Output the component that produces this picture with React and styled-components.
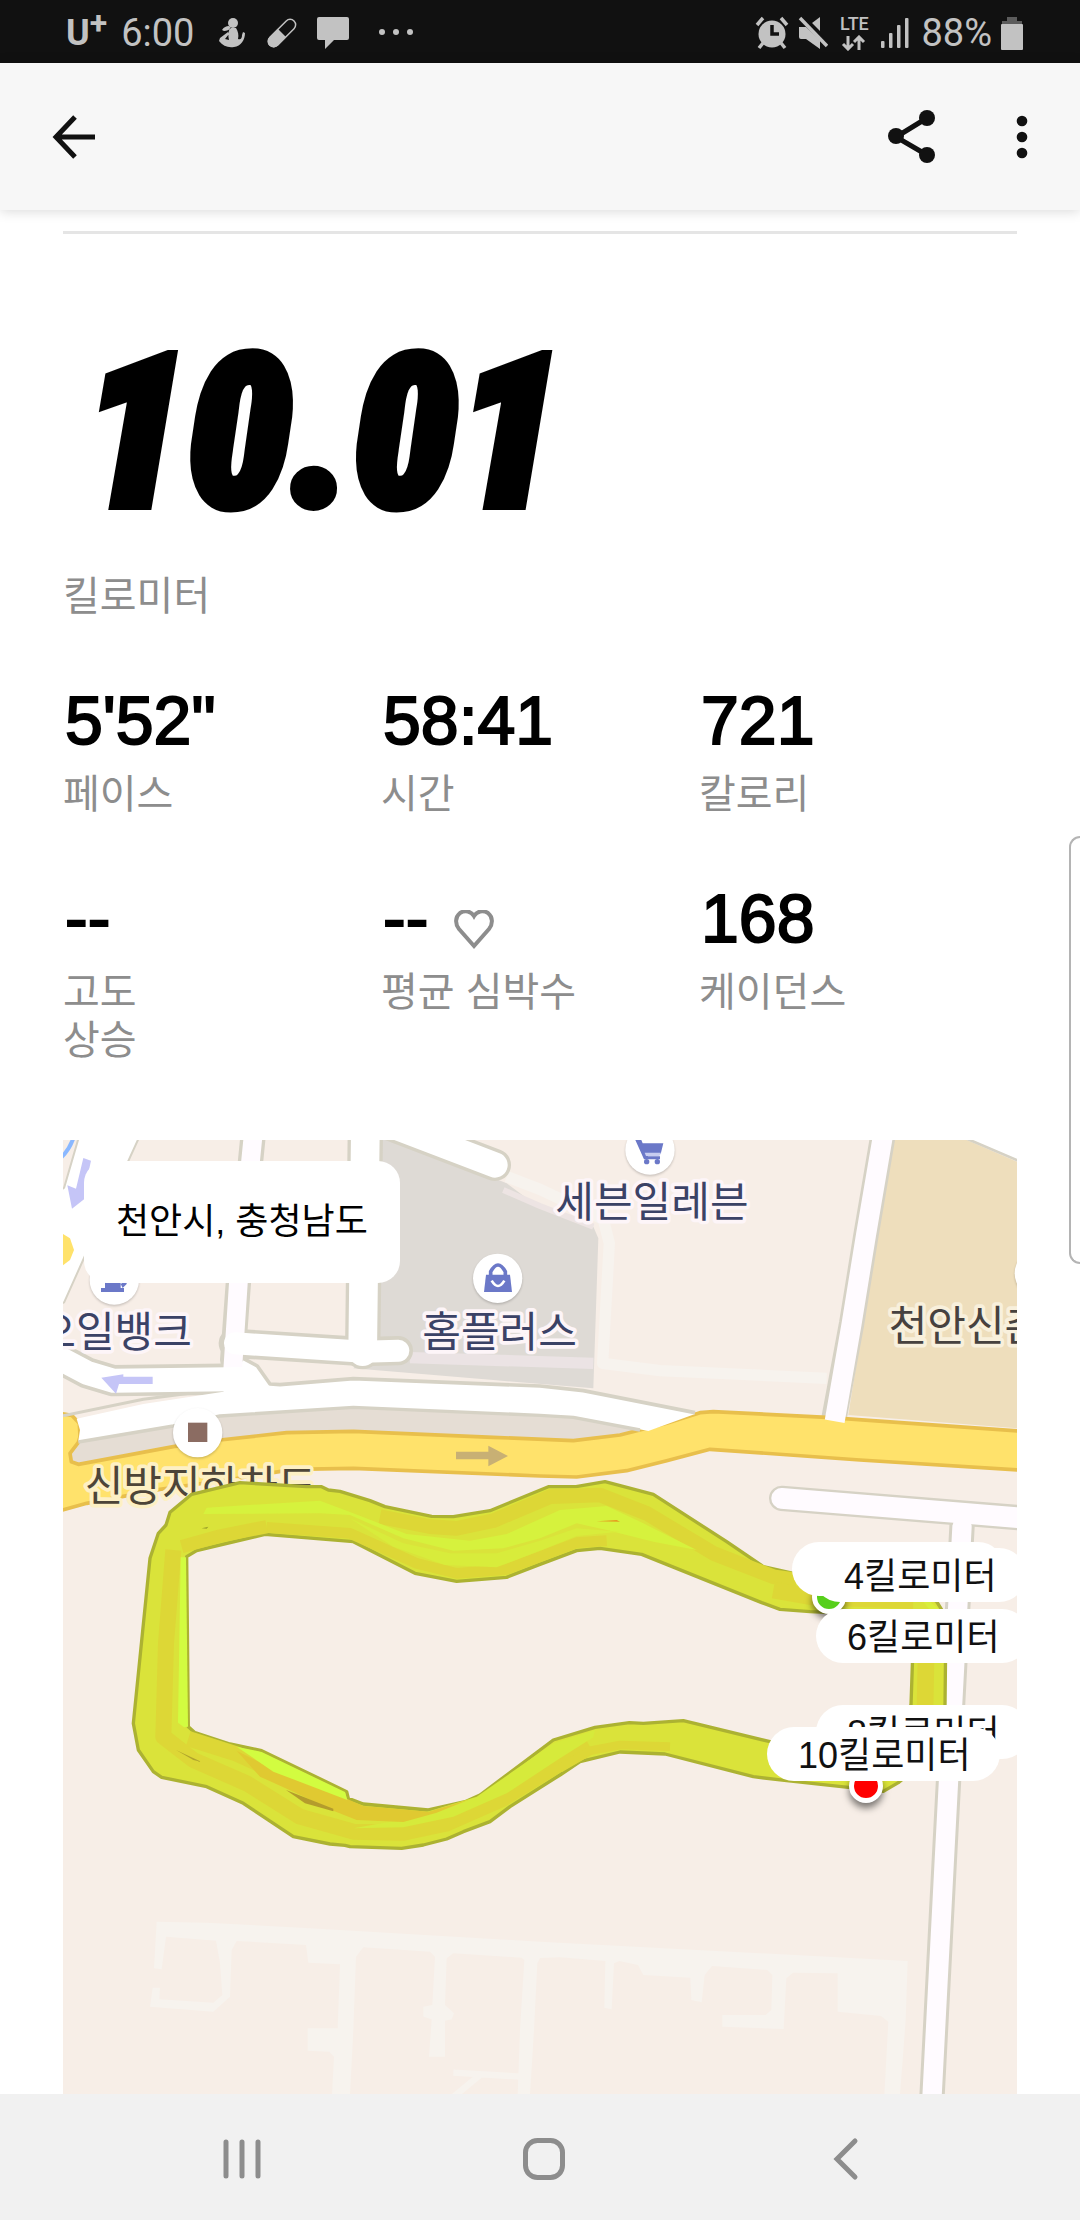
import styled, { createGlobalStyle } from 'styled-components'

const MAP_SIZE = 954

const stats = [
  { value: '5\'52"', label: '페이스' },
  { value: '58:41', label: '시간' },
  { value: '721', label: '칼로리' },
  { value: '--', label: '고도 상승', narrow: true },
  { value: '--', label: '평균 심박수', heart: true },
  { value: '168', label: '케이던스' },
]

const splits = [
  { label: '2킬로미터', x: 729, y: 402 },
  { label: '4킬로미터', x: 750, y: 408 },
  { label: '6킬로미터', x: 753, y: 469 },
  { label: '8킬로미터', x: 753, y: 565 },
  { label: '10킬로미터', x: 704, y: 587 },
]

const points = [
  { name: '출발', color: '#57cf1b', x: 766, y: 457 },
  { name: '도착', color: '#ff0000', x: 803, y: 646 },
]

const place = ({ x, y }) => ({
  left: `${(x / MAP_SIZE) * 100}%`,
  top: `${(y / MAP_SIZE) * 100}%`,
})

function StatusBar() {
  return (
    <Status>
      <StatusGroup>
        <Carrier>
          U<sup>+</sup>
        </Carrier>
        <StatusText>6:00</StatusText>
      </StatusGroup>
      <Notices>
        <svg width="30" height="34" viewBox="0 0 30 34">
          <circle cx="16" cy="7" r="5" />
          <path d="M12 10c-3 0-5 1-7 4l2 1c3 0 5-1 7-3zM13 12h6c2 3 3 7 2 11 3 1 4-1 4-4l1-3 2 1c0 7-4 13-11 14-6 1-11-1-15-6l1-3 8-6 1 2-4 5 4 1c-1-4-1-8 1-12z" />
        </svg>
        <svg width="30" height="34" viewBox="0 0 30 34">
          <g transform="rotate(45 15 17)">
            <rect x="9.500" y="0" width="11" height="34" rx="5.500" fill="none" stroke="#c2c2c2" strokeWidth="1.500" />
            <path d="M9 17h12v12a6 6 0 0 1-12 0z" />
          </g>
        </svg>
        <svg width="32" height="34" viewBox="0 0 32 34">
          <path d="M2 1h28a2 2 0 0 1 2 2v19a2 2 0 0 1-2 2H17l-9 9v-9H2a2 2 0 0 1-2-2V3a2 2 0 0 1 2-2z" />
        </svg>
        <svg width="54" height="34" viewBox="0 0 54 34">
          <circle cx="13" cy="16" r="3" />
          <circle cx="27" cy="16" r="3" />
          <circle cx="41" cy="16" r="3" />
        </svg>
      </Notices>
      <StatusGroup $end>
        <svg width="34" height="34" viewBox="0 0 34 34">
          <path d="M2 9l6-7M32 9l-6-7" stroke="#c2c2c2" strokeWidth="3.500" />
          <path d="M8 27l-4 5M26 27l4 5" stroke="#c2c2c2" strokeWidth="3.500" />
          <circle cx="17" cy="18" r="13.500" />
          <path d="M17 9v9h7" stroke="#111" strokeWidth="3.500" fill="none" />
        </svg>
        <svg width="30" height="34" viewBox="0 0 30 34">
          <path d="M1 11h7l14 13v9L8 23H3a2 2 0 0 1-2-2zM14 7l8-6v14z" />
          <path d="M5 0l26 28" stroke="#111" strokeWidth="3" />
          <path d="M2 2l27 28" stroke="#c2c2c2" strokeWidth="3.500" />
        </svg>
        <Network>
          LTE
          <svg width="26" height="16" viewBox="0 0 26 16">
            <path d="M7 1v13M2 9l5 5 5-5M18 15V2M13 7l5-5 5 5" fill="none" stroke="#c2c2c2" strokeWidth="3" />
          </svg>
        </Network>
        <svg width="32" height="34" viewBox="0 0 32 34">
          <rect x="1" y="25" width="3.500" height="7" rx="1" />
          <rect x="9" y="17" width="3.500" height="15" rx="1" />
          <rect x="17" y="9" width="3.500" height="23" rx="1" />
          <rect x="25" y="2" width="3.500" height="30" rx="1" />
        </svg>
        <StatusText>88%</StatusText>
        <svg width="22" height="34" viewBox="0 0 22 34">
          <path d="M6 1h10v4h5v5H1V5h5z" fill="#5c5c5c" />
          <rect x="0" y="8" width="22" height="26" rx="1" />
        </svg>
      </StatusGroup>
    </Status>
  )
}

function AppBar() {
  return (
    <Bar>
      <IconButton aria-label="뒤로">
        <svg width="48" height="60" viewBox="0 0 48 60">
          <path d="M45 30H7M25 10L6 30l19 20" fill="none" stroke="#111" strokeWidth="5" />
        </svg>
      </IconButton>
      <Actions>
        <IconButton aria-label="공유">
          <svg width="48" height="60" viewBox="0 0 48 60">
            <path d="M40 11L9 30l31 18" fill="none" stroke="#111" strokeWidth="5" />
            <circle cx="9" cy="29" r="8" fill="#111" />
            <circle cx="40" cy="11" r="8" fill="#111" />
            <circle cx="40" cy="48" r="8" fill="#111" />
          </svg>
        </IconButton>
        <IconButton aria-label="더보기">
          <svg width="48" height="60" viewBox="0 0 48 60">
            <circle cx="24" cy="14" r="5.300" fill="#111" />
            <circle cx="24" cy="30" r="5.300" fill="#111" />
            <circle cx="24" cy="46" r="5.300" fill="#111" />
          </svg>
        </IconButton>
      </Actions>
    </Bar>
  )
}

function Heart() {
  return (
    <svg width="40" height="40" viewBox="0 0 40 40">
      <path
        d="M20 36L5 19C1 14 1 7 6 3c5-3 11-2 14 3 3-5 9-6 14-3 5 4 5 11 1 16z"
        fill="none"
        stroke="#8d8d8d"
        strokeWidth="4"
      />
    </svg>
  )
}

function Roads() {
  return (
    <g fill="none" strokeLinejoin="round">
      {/* blocks */}
      <path d="M2500 30L2440 380 2365 855 2871 895V95L2720 30z" fill="#eedebc" />
      <path d="M2720 26L2875 92V20z" fill="#fff" stroke="#d6d2c5" strokeWidth="8" />
      <path d="M965 30H1010L1340 160 1440 235 1600 290 1615 325 1600 775 1300 750 880 715 955 640z" fill="#dedad5" />
      <path d="M1050 683L1600 700" stroke="#ebe3e4" strokeWidth="34" />
      <path d="M1340 140L1440 178 1630 268 1648 340 1628 700 1800 722 2300 745" stroke="#f7f3ee" strokeWidth="34" />
      <path d="M1330 180L1440 228 1600 290" stroke="#ede4e3" strokeWidth="18" />

      {/* casings of the white streets */}
      <g stroke="#d6d2c5" strokeLinecap="round">
        <path d="M60 20L15 175-20 200V520L10 515 75 370 235 20z" strokeWidth="12" />
        <path d="M900 -50L1305 105" strokeWidth="96" />
        <path d="M580 10L535 460 518 690" strokeWidth="76" />
        <path d="M916 10L908 665" strokeWidth="106" />
        <path d="M520 640L910 665 1015 662" strokeWidth="88" />
        <path d="M-20 675L80 728 160 752 550 747" strokeWidth="94" />
        <path d="M2470 10L2418 315 2375 580 2322 865" strokeWidth="76" strokeLinecap="butt" />
        <path d="M2165 1105L2900 1165" strokeWidth="76" />
        <path d="M2706 1190L2653 2190 2616 2900" strokeWidth="76" />
      </g>
      <path d="M60 20L15 175-20 200V520L10 515 75 370 235 20z" fill="#fff" />

      {/* underpass and the main road */}
      <path
        d="M30 940L340 885 480 855 880 830 1200 845 1540 862 1780 900 1540 940 1300 925 880 910 480 935 60 1005 30 990z"
        fill="#e5ddd4"
      />
      <path
        d="M-10 848L35 856 58 880 60 920 55 937 30 970 34 995 55 1003 340 950 480 930 680 908 880 904 1300 922 1540 932 1680 915 1820 880 1920 848 1960 845 2300 862 2880 903V1020L2400 990 1950 958 1820 992 1700 1022 1550 1041 1440 1038 880 1015 700 1018 500 1050 300 1078 80 1120-10 1145z"
        fill="#ffe26b"
        stroke="#e8bf4c"
        strokeWidth="11"
      />
      <path
        d="M50 866L250 822 490 785 550 690 592 712 630 762 880 746 1440 771 1570 784 1905 852 1765 903 1540 858 880 832 480 858 340 884 55 932 60 900z"
        fill="#fff"
      />
      <path d="M9 857L250 808 400 788" stroke="#d6d2c5" strokeWidth="9" />
      <path d="M550 685L592 708 630 762 660 764 880 746 1440 768 1570 782 1905 848" stroke="#d6d2c5" strokeWidth="11" />
      <path d="M55 936L340 888 480 858 880 832 1440 856 1540 862 1740 900" stroke="#d6d2c5" strokeWidth="10" />

      {/* street surfaces */}
      <g strokeLinecap="round" stroke="#fff">
        <path d="M900 -50L1305 105" strokeWidth="76" />
        <path d="M580 10L535 460 518 720" stroke="#fffbff" strokeWidth="56" />
        <path d="M916 10L908 665" strokeWidth="86" />
        <path d="M525 640L910 665 1015 662" strokeWidth="66" />
        <path d="M-20 675L80 728 160 752 560 747" strokeWidth="72" />
        <path d="M2470 10L2418 315 2375 580 2324 874" stroke="#fffbff" strokeWidth="60" strokeLinecap="butt" />
        <path d="M2165 1105L2900 1165" stroke="#fffbff" strokeWidth="62" />
        <path d="M2706 1190L2653 2190 2616 2900" stroke="#fffbff" strokeWidth="58" />
      </g>

      <path d="M-10 300L30 325 42 360 30 390-10 420z" fill="#ffe26b" />
      <path d="M0 85Q25 65 40 25" stroke="#8ab8ff" strokeWidth="12" />
      <path d="M70 84L93 92 74 180 76 205 36 236 22 166 48 176z" fill="#c5c5f7" />
      <path d="M278 740V762H177L168 791 124 743 190 733V740z" fill="#c5c5f7" />
      <path d="M1188 965H1285V947L1344 978 1285 1009V988H1188z" fill="#c8b074" />

      {/* footpaths of the estate in the south */}
      <path
        d="M290 2375L440 2378 750 2395 1440 2435 2543 2493 2537 2670 2520 2895H2473L2485 2675 2463 2658 2333 2645V2530L2199 2528 2179 2545 2171 2697 1987 2690V2655H2117L2134 2640 2137 2535 2122 2520 1956 2508 1934 2535 1925 2617 1894 2610 1891 2543 1750 2535 1734 2505 1678 2493 1662 2500 1655 2638 1633 2633 1636 2493 1500 2482 1440 2484 1432 2500 1422 2700 1410 2895H1373L1380 2700 1393 2490 1385 2483 1180 2470 1160 2485 1155 2625 1182 2650 1175 2668 1155 2672V2780H1107L1115 2668 1090 2660V2630L1117 2625 1125 2480 1110 2465 910 2452 888 2480 880 2700 870 2895H816L822 2780 808 2765 743 2762V2695H833L840 2503 745 2498 738 2445 530 2433 515 2460 510 2600 460 2645 270 2630 278 2573H300L298 2608 460 2618 487 2595 480 2500 468 2432 318 2420 305 2518 282 2515z"
        fill="#f7f3ee"
      />
      <path d="M1180 2828L1385 2840M1260 2835L1175 2905" stroke="#f7f3ee" strokeWidth="19" />
    </g>
  )
}

function Places() {
  return (
    <>
      <PoiDisc cx="1313" cy="445" r="74" />
      <PoiDisc cx="1770" cy="60" r="74" />
      <PoiDisc cx="163" cy="450" r="74" />
      <PoiDisc cx="413" cy="908" r="74" />
      <PoiDisc cx="2938" cy="430" r="74" />
      <g fill="#6b78c8">
        <path d="M1278 434H1350L1356 486H1272z" />
        <path d="M1292 440V425Q1314 385 1336 425V440" fill="none" stroke="#6b78c8" strokeWidth="11" />
        <path d="M1295 452Q1314 484 1333 452" fill="none" stroke="#fff" strokeWidth="8" />
        <path d="M1726 30H1744L1748 40H1810L1802 72H1760L1764 79H1800V88H1752z" />
        <path d="M1754 68H1804L1798 78H1758z" fill="#c8cdf0" />
        <circle cx="1760" cy="95" r="8" />
        <circle cx="1792" cy="95" r="8" />
        <path d="M135 420H182V474H192V486H123V474H135zM182 462L200 450V462L188 474z" />
      </g>
      <path d="M384 878H442V936H384z" fill="#8b6c62" />
      <PlaceName x="1486" y="262">세븐일레븐</PlaceName>
      <PlaceName x="1087" y="650">홈플러스</PlaceName>
      <PlaceName x="-68" y="650">오일뱅크</PlaceName>
      <PlaceName x="2486" y="633" $ink="#47423f" $halo="#f8f0dc">천안신촌</PlaceName>
      <PlaceName x="74" y="1112" $ink="#4d4538" $halo="#fdf0c4">신방지하차도</PlaceName>
    </>
  )
}

function Route() {
  return (
    <g fill="none" strokeLinejoin="round">
      <path
        d="M540 1058L740 1070 785 1070 805 1080 840 1084 930 1112 975 1130 1115 1159 1180 1160 1290 1142 1465 1070 1548 1070 1635 1055 1780 1093 2000 1235 2110 1310 2200 1330 2560 1360 2630 1415 2658 1460 2655 1725 2645 1850 2515 1958 2470 1984 2365 1972 2180 1952 2080 1940 1815 1872 1680 1866 1560 1895 1500 1935 1350 2030 1290 2075 1210 2105 1160 2127 1090 2145 1025 2155 870 2150 855 2146 810 2142 700 2120 550 2020 440 1970 305 1942 280 1925 235 1860 220 1780 270 1285 295 1210 318 1185 330 1147 395 1093z
           M380 1280L410 1262 615 1213 880 1235 1065 1330 1190 1354 1340 1342 1440 1303 1550 1262 1620 1255 1745 1273 2105 1418 2160 1438 2250 1445 2562 1460 2553 1725 2540 1850 2400 1900 2130 1835 1870 1772 1750 1780 1708 1778 1605 1792 1480 1830 1260 1995 1215 2015 1105 2040 910 2022 865 2005 860 1985 605 1862 510 1842 405 1808 385 1790z"
        fill="#dae33a"
        fillRule="evenodd"
        stroke="#acb232"
        strokeWidth="10"
      />
      {/* overlapping laps */}
      <g stroke="#ddd736">
        <path d="M960 1160L1110 1190 1190 1195 1300 1172 1470 1100 1620 1095 1760 1150 1960 1270 2140 1340 2210 1350" strokeWidth="44" />
        <path d="M620 1192L870 1210 1070 1300 1190 1330 1340 1318 1550 1238 1640 1232" strokeWidth="32" />
        <path d="M365 1250L480 1218 620 1190" strokeWidth="40" />
        <path d="M340 1260L318 1540 310 1820 400 1890 560 1960 720 2060 880 2105 1030 2108 1160 2080 1330 2005 1500 1900 1590 1850" strokeWidth="48" />
        <path d="M2140 1380L2250 1400 2560 1412M2600 1480L2595 1740" strokeWidth="50" />
        <path d="M385 1826L530 1872 700 1950" strokeWidth="46" />
        <path d="M1500 1915L1590 1862 1680 1845 1830 1850" strokeWidth="26" />
      </g>
      <path d="M440 1133L780 1112 880 1150 1040 1212 1230 1232 1340 1212 1500 1140 1640 1128 1750 1180 1910 1260 1780 1235 1640 1200 1550 1180 1440 1225 1330 1255 1180 1262 1030 1225 870 1155 780 1150 430 1152z" fill="#d6f23d" />
      <path d="M870 1165L1030 1240 1170 1270 1310 1270 1440 1232 1550 1195 1680 1205 1550 1218 1440 1262 1310 1312 1155 1305 1000 1250z" fill="#d8ec3b" />
      <path d="M1250 2000L1480 1840 1605 1800 1600 1822 1500 1885 1340 1990 1180 2060 1030 2092 880 2095 1020 2070z" fill="#d6ea3b" />
      <path d="M362 1282L378 1282 384 1790 372 1792 354 1778z" fill="#d2fc40" />
      <path d="M530 1862L640 1918 860 2006 910 2028 1105 2045 1230 2008 1130 2048 1030 2076 890 2070 820 2042 700 1985 600 1940z" fill="#e0c931" />
      <path d="M530 1850L605 1866 855 1986 862 2010 640 1925z" fill="#d2fc40" />
      <path d="M678 1980L820 2036V2044L735 2020z" fill="#b49c2c" />
      <path d="M348 1860L425 1896 400 1890z" fill="#b0a42d" />
      <path d="M1610 1174L1670 1170 1680 1175z" fill="#e59a1f" />
      <path d="M425 1195L445 1190 440 1196z" fill="#9ca02a" />
      <path d="M2590 1415L2610 1415 2640 1440H2610z" fill="#d8ee3c" />
    </g>
  )
}

function RunMap() {
  return (
    <MapBox aria-label="달리기 경로">
      <svg viewBox="9 30 2862 2862">
        <Roads />
        <Places />
        <Route />
      </svg>
      <Location>천안시, 충청남도</Location>
      {points.map((point) => (
        <Point key={point.name} title={point.name} $color={point.color} style={place(point)} />
      ))}
      {splits.map((split) => (
        <Split key={split.label} style={place(split)}>
          {split.label}
        </Split>
      ))}
    </MapBox>
  )
}

function NavBar() {
  return (
    <Nav>
      <IconButton aria-label="최근 앱">
        <svg width="48" height="48" viewBox="0 0 48 48">
          <path d="M8 7v34M24 7v34M40 7v34" stroke="#8d8d8d" strokeWidth="5" strokeLinecap="round" />
        </svg>
      </IconButton>
      <IconButton aria-label="홈">
        <svg width="48" height="48" viewBox="0 0 48 48">
          <rect x="5.500" y="5.500" width="37" height="37" rx="12" fill="none" stroke="#8d8d8d" strokeWidth="5" />
        </svg>
      </IconButton>
      <IconButton aria-label="이전">
        <svg width="48" height="48" viewBox="0 0 48 48">
          <path d="M33 6L15 24l18 18" fill="none" stroke="#8d8d8d" strokeWidth="5" strokeLinecap="round" />
        </svg>
      </IconButton>
    </Nav>
  )
}

function App() {
  return (
    <Screen>
      <GlobalStyle />
      <StatusBar />
      <AppBar />
      <Main>
        <Rule />
        <Distance>10.01</Distance>
        <Label>킬로미터</Label>
        <Stats>
          {stats.map((stat) => (
            <div key={stat.label}>
              <Value>
                {stat.value}
                {stat.heart && <Heart />}
              </Value>
              <Label $narrow={stat.narrow}>{stat.label}</Label>
            </div>
          ))}
        </Stats>
        <RunMap />
      </Main>
      <NavBar />
      <EdgeHandle />
    </Screen>
  )
}

export default App

const GlobalStyle = createGlobalStyle`
  * {
    box-sizing: border-box;
  }
  body {
    margin: 0;
    background: #fff;
    color: #000;
    font-family: 'Liberation Sans', 'Noto Sans CJK KR', sans-serif;
  }
  svg {
    display: block;
    flex: none;
  }
`

const Screen = styled.div`
  position: relative;
  display: flex;
  flex-direction: column;
  min-height: 100vh;
  overflow: hidden;
`

const Status = styled.div`
  display: flex;
  align-items: center;
  height: 63px;
  padding: 3px 57px 0 66px;
  background: #111;
  color: #c2c2c2;
  font-family: Roboto, sans-serif;
  svg {
    fill: #c2c2c2;
  }
`

const StatusGroup = styled.div`
  display: flex;
  align-items: center;
  gap: ${(props) => (props.$end ? '9px' : '14px')};
  margin-left: ${(props) => (props.$end ? 'auto' : '0')};
`

const Notices = styled.div`
  display: flex;
  align-items: center;
  gap: 20px;
  margin-left: 23px;
`

const Carrier = styled.span`
  display: flex;
  font-size: 36px;
  font-weight: 700;
  line-height: 44px;
  sup {
    font-size: 32px;
    line-height: 24px;
  }
`

const StatusText = styled.span`
  font-size: 38px;
  line-height: 44px;
`

const Network = styled.span`
  display: flex;
  flex-direction: column;
  align-items: center;
  gap: 2px;
  width: 34px;
  font-size: 18px;
  font-weight: 500;
  line-height: 18px;
`

const Bar = styled.header`
  position: relative;
  display: flex;
  align-items: center;
  justify-content: space-between;
  height: 147px;
  padding: 0 34px 0 50px;
  background: #f7f7f7;
  box-shadow: 0 1px 12px rgba(0, 0, 0, 0.16);
`

const Actions = styled.div`
  display: flex;
  gap: 63px;
`

const IconButton = styled.button`
  display: flex;
  align-items: center;
  justify-content: center;
  padding: 0;
  border: 0;
  background: none;
`

const Main = styled.main`
  padding: 21px 63px 0;
`

const Rule = styled.hr`
  height: 3px;
  margin: 0;
  border: 0;
  background: #e5e5e5;
`

const Distance = styled.h1`
  margin: 119px 0 59px 20px;
  font-family: 'Roboto Condensed', 'Liberation Sans', sans-serif;
  font-size: 210px;
  font-style: italic;
  font-weight: 900;
  line-height: 160px;
  -webkit-text-stroke: 10px #000;
`

const Label = styled.p`
  width: ${(props) => (props.$narrow ? '90px' : 'auto')};
  margin: 0;
  color: #8d8d8d;
  font-size: 40px;
  line-height: 48px;
`

const Stats = styled.section`
  display: grid;
  grid-template-columns: repeat(3, 1fr);
  row-gap: 68px;
  margin: 68px 0 76px;
`

const Value = styled.div`
  display: flex;
  align-items: flex-end;
  gap: 26px;
  margin-bottom: 18px;
  padding-left: 2px;
  font-size: 68px;
  line-height: 64px;
  -webkit-text-stroke: 2px #000;
`

const MapBox = styled.section`
  position: relative;
  aspect-ratio: 1;
  overflow: hidden;
  background: #f7eee7;
  > svg {
    width: 100%;
    height: 100%;
  }
`

const PoiDisc = styled.circle`
  fill: #fff;
  filter: drop-shadow(0 4px 3px rgba(0, 0, 0, 0.2));
`

const PlaceName = styled.text`
  fill: ${(props) => props.$ink || '#3b4266'};
  stroke: ${(props) => props.$halo || '#fdf5f8'};
  stroke-width: 22px;
  stroke-linejoin: round;
  paint-order: stroke;
  font-family: 'Noto Sans CJK KR', sans-serif;
  font-size: 126px;
  font-weight: 400;
`

const Location = styled.div`
  position: absolute;
  top: 21px;
  left: 21px;
  padding: 0 32px;
  border-radius: 22px;
  background: #fff;
  font-size: 36px;
  line-height: 122px;
`

const Point = styled.i`
  position: absolute;
  width: 34px;
  height: 34px;
  border: 5px solid #fff;
  border-radius: 50%;
  background: ${(props) => props.$color};
  box-shadow: 0 5px 7px rgba(0, 0, 0, 0.5);
  transform: translate(-50%, -50%);
`

const Split = styled.span`
  position: absolute;
  padding: 4px 29px 0 31px;
  border-radius: 27px;
  background: #fff;
  color: #111;
  font-size: 36px;
  line-height: 50px;
  white-space: nowrap;
`

const Nav = styled.nav`
  display: grid;
  grid-template-columns: repeat(3, 1fr);
  align-items: center;
  height: 126px;
  margin-top: auto;
  padding: 4px 83px 0 91px;
  background: #f1f1f1;
`

const EdgeHandle = styled.div`
  position: absolute;
  top: 836px;
  right: 0;
  width: 11px;
  height: 428px;
  border: 2px solid #b4b4b4;
  border-right: 0;
  border-radius: 16px 0 0 16px;
  background: #fff;
`
